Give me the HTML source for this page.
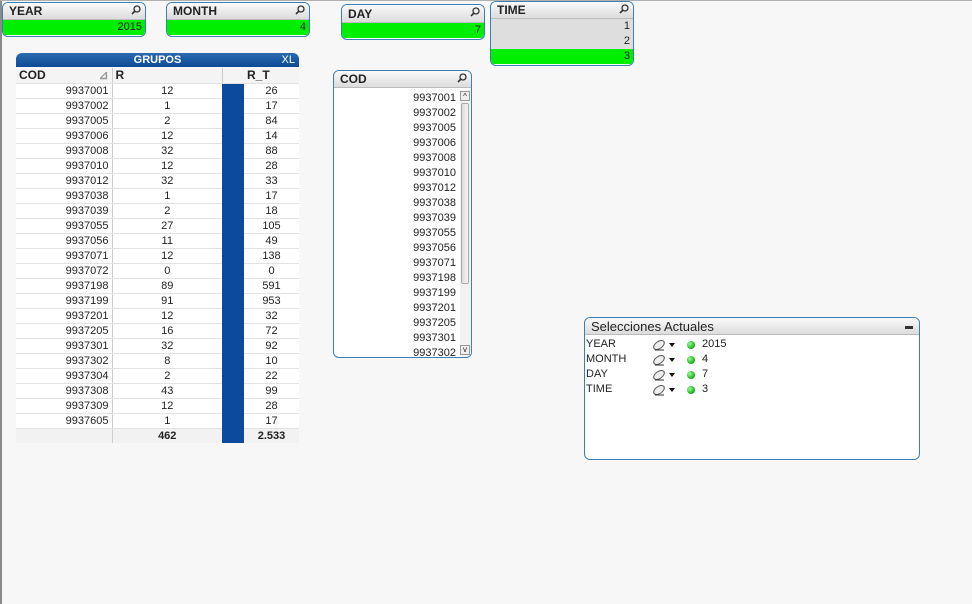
<!DOCTYPE html>
<html><head><meta charset="utf-8"><style>
*{box-sizing:border-box;margin:0;padding:0}
body{width:972px;height:604px;background:#f7f7f7;position:relative;overflow:hidden;font-family:"Liberation Sans",Tahoma,sans-serif;font-size:11px;color:#222}
.abs{position:absolute}
.lb{position:absolute;border:1px solid #3b7fb5;border-radius:6px;background:#fff;overflow:hidden}
.lbh{height:17px;background:linear-gradient(#fafafa,#dcdcdc);border-bottom:1px solid #bbb;font-size:12px;font-weight:bold;padding-left:6px;line-height:17px;color:#222;position:relative}
.mag{position:absolute;right:4px;top:2px;width:10px;height:10px}
.sel{background:#00ee00;text-align:right;padding-right:3px;height:15px;line-height:15px}
.gr{background:#dedede;text-align:right;padding-right:3px;height:15px;line-height:15px}
table{border-collapse:collapse}
td{height:15px;padding:0 3px;font-size:11px;border-bottom:1px solid #e2e2e2;line-height:14px}
</style></head><body>
<div class="abs" style="left:0;top:0;width:2px;height:604px;background:#8a8a8a"></div>
<div class="abs" style="left:0;top:0;width:972px;height:1px;background:#b0b0b0"></div>

<svg width="0" height="0" style="position:absolute"><defs><symbol id="m" viewBox="0 0 10 10"><circle cx="6" cy="4" r="3" fill="none" stroke="#333" stroke-width="1.3"/><line x1="4" y1="6" x2="1" y2="9" stroke="#333" stroke-width="1.6"/></symbol></defs></svg>

<div class="lb" style="left:2px;top:2px;width:144px;height:35px"><div class="lbh">YEAR<svg class="mag"><use href="#m"/></svg></div><div class="sel">2015</div></div>
<div class="lb" style="left:166px;top:2px;width:144px;height:35px"><div class="lbh">MONTH<svg class="mag"><use href="#m"/></svg></div><div class="sel">4</div></div>
<div class="lb" style="left:341px;top:4px;width:144px;height:36px"><div class="lbh" style="height:18px;line-height:18px">DAY<svg class="mag"><use href="#m"/></svg></div><div class="sel">7</div></div>
<div class="lb" style="left:490px;top:1px;width:144px;height:65px"><div class="lbh">TIME<svg class="mag"><use href="#m"/></svg></div><div class="gr">1</div><div class="gr">2</div><div class="sel">3</div></div>

<!-- GRUPOS -->
<div class="abs" style="left:16px;top:53px;width:283px;height:14px;background:linear-gradient(#2a6bb0,#0c4a95);border-radius:6px 6px 0 0;color:#fff;font-weight:bold;text-align:center;line-height:14px;font-size:11px">GRUPOS<span style="position:absolute;right:4px;font-weight:normal">XL</span></div>
<div class="abs" style="left:16px;top:68px;width:283px">
<table style="width:283px;background:#fff">
<tr style="background:#f4f4f4"><td style="width:96px;font-weight:bold;font-size:12px;border-right:1px solid #ccc">COD<span style="float:right;color:#999">⊿</span></td><td style="width:110px;font-weight:bold;font-size:12px;border-right:1px solid #ccc">R</td><td style="width:22px;background:#f4f4f4"></td><td style="font-weight:bold;font-size:12px">R_T</td></tr>
<tbody id="rows"></tbody>
<tr style="background:#f2f2f2"><td style="border-right:1px solid #ccc;border-bottom:none"></td><td style="text-align:center;font-weight:bold;border-bottom:none">462</td><td style="background:#0c4a9e;border-bottom:none"></td><td style="text-align:center;font-weight:bold;border-bottom:none">2.533</td></tr>
</table></div>

<!-- COD listbox -->
<div class="lb" style="left:333px;top:70px;width:139px;height:288px">
<div class="lbh">COD<svg class="mag"><use href="#m"/></svg></div>
<div id="cod" style="position:absolute;left:0;top:20px;width:124px;text-align:right;padding-right:2px;line-height:15px"></div>
<div class="abs" style="left:126px;top:19px;width:11px;height:267px;background:#f2f2f2"></div>
<div class="abs" style="left:126px;top:20px;width:10px;height:10px;border:1px solid #999;background:#eee;font-size:8px;text-align:center;line-height:9px">^</div>
<div class="abs" style="left:127px;top:32px;width:8px;height:181px;border:1px solid #aaa;border-radius:2px;background:linear-gradient(90deg,#ddd,#f4f4f4)"></div>
<div class="abs" style="left:126px;top:274px;width:10px;height:10px;border:1px solid #999;background:#eee;font-size:8px;text-align:center;line-height:8px">v</div>
</div>

<!-- Selecciones -->
<div class="lb" style="left:584px;top:317px;width:336px;height:143px">
<div class="lbh" style="font-size:13px;font-weight:normal">Selecciones Actuales<span style="position:absolute;right:6px;top:8px;width:8px;height:3px;background:#333"></span></div>
<div id="cs"></div>
</div>

<script>
var d=[[9937001,12,26],[9937002,1,17],[9937005,2,84],[9937006,12,14],[9937008,32,88],[9937010,12,28],[9937012,32,33],[9937038,1,17],[9937039,2,18],[9937055,27,105],[9937056,11,49],[9937071,12,138],[9937072,0,0],[9937198,89,591],[9937199,91,953],[9937201,12,32],[9937205,16,72],[9937301,32,92],[9937302,8,10],[9937304,2,22],[9937308,43,99],[9937309,12,28],[9937605,1,17]];
var h="";d.forEach(function(r){h+='<tr><td style="text-align:right;border-right:1px solid #ccc">'+r[0]+'</td><td style="text-align:center">'+r[1]+'</td><td style="background:#0c4a9e;border-bottom:1px solid #0c4a9e"></td><td style="text-align:center">'+r[2]+'</td></tr>'});
document.getElementById('rows').innerHTML=h;
var c="";d.filter(function(r){return r[0]!=9937072}).slice(0,18).forEach(function(r){c+='<div>'+r[0]+'</div>'});document.getElementById('cod').innerHTML=c;
var s=[["YEAR","2015"],["MONTH","4"],["DAY","7"],["TIME","3"]],q="";
s.forEach(function(r,i){q+='<div style="position:absolute;left:1px;top:'+(19+i*15)+'px;height:15px;line-height:15px;width:300px">'+r[0]+'<svg style="position:absolute;left:66px;top:2px" width="26" height="12"><ellipse cx="7" cy="6" rx="6" ry="3.5" transform="rotate(-35 7 6)" fill="#eee" stroke="#555"/><line x1="3" y1="11" x2="12" y2="11" stroke="#333"/><path d="M17 4h6l-3 4z" fill="#111"/></svg><span style="position:absolute;left:101px;top:4px;width:8px;height:8px;border-radius:50%;background:radial-gradient(circle at 35% 35%,#9f9,#1a1 70%)"></span><span style="position:absolute;left:116px">'+r[1]+'</span></div>'});
document.getElementById('cs').innerHTML=q;
</script>
</body></html>
